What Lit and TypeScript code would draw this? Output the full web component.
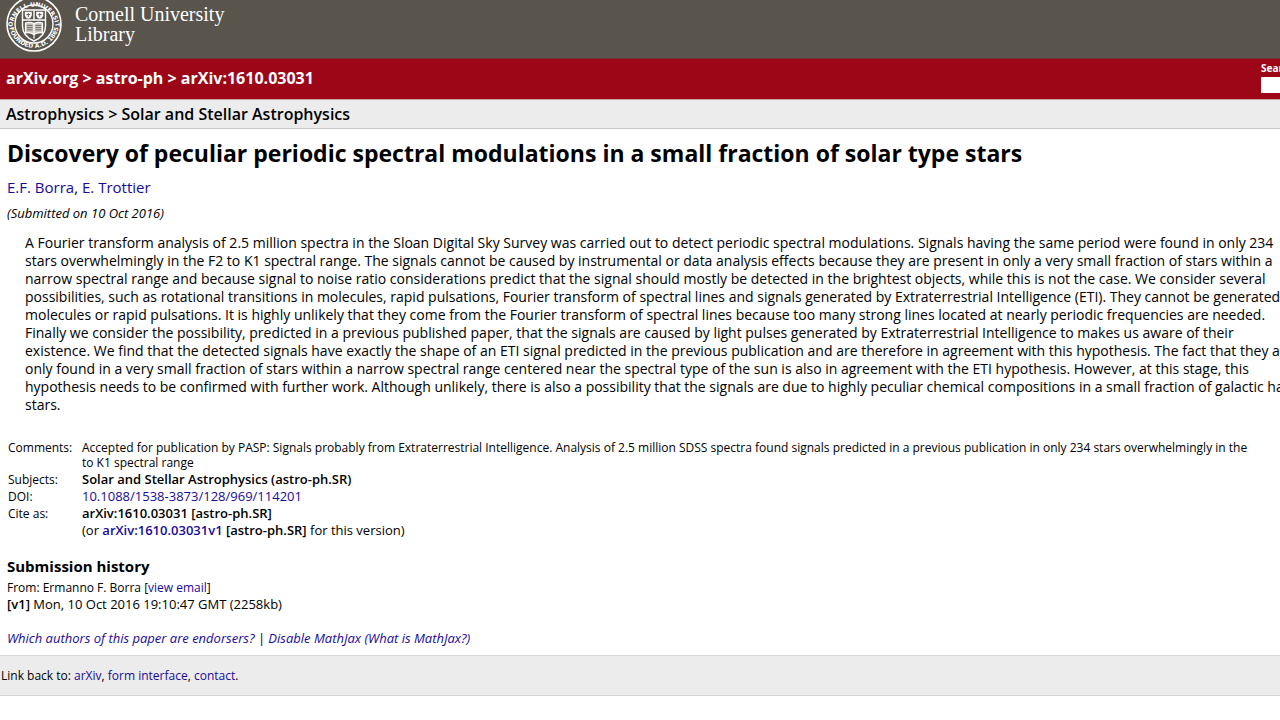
import { LitElement, html, css, svg } from "lit";
import { customElement, state } from "lit/decorators.js";

const ABSTRACT_LINES = [
  "A Fourier transform analysis of 2.5 million spectra in the Sloan Digital Sky Survey was carried out to detect periodic spectral modulations. Signals having the same period were found in only 234",
  "stars overwhelmingly in the F2 to K1 spectral range. The signals cannot be caused by instrumental or data analysis effects because they are present in only a very small fraction of stars within a",
  "narrow spectral range and because signal to noise ratio considerations predict that the signal should mostly be detected in the brightest objects, while this is not the case. We consider several",
  "possibilities, such as rotational transitions in molecules, rapid pulsations, Fourier transform of spectral lines and signals generated by Extraterrestrial Intelligence (ETI). They cannot be generated by",
  "molecules or rapid pulsations. It is highly unlikely that they come from the Fourier transform of spectral lines because too many strong lines located at nearly periodic frequencies are needed.",
  "Finally we consider the possibility, predicted in a previous published paper, that the signals are caused by light pulses generated by Extraterrestrial Intelligence to makes us aware of their",
  "existence. We find that the detected signals have exactly the shape of an ETI signal predicted in the previous publication and are therefore in agreement with this hypothesis. The fact that they are",
  "only found in a very small fraction of stars within a narrow spectral range centered near the spectral type of the sun is also in agreement with the ETI hypothesis. However, at this stage, this",
  "hypothesis needs to be confirmed with further work. Although unlikely, there is also a possibility that the signals are due to highly peculiar chemical compositions in a small fraction of galactic halo",
  "stars.",
];

const seal = svg`
  <circle cx="28" cy="28" r="27" fill="none" stroke="#fff" stroke-width="1.6"/>
  <circle cx="28" cy="28" r="19" fill="none" stroke="#fff" stroke-width="1.4"/>
  <path id="top" d="M6.5 32 A21 21 0 1 1 49.5 32" fill="none"/>
  <path id="bottom" d="M3.2 31.5 A25.3 25.3 0 0 0 52.8 31.5" fill="none"/>
  <text class="seal-text"><textPath href="#top" startOffset="50%" text-anchor="middle">CORNELL UNIVERSITY</textPath></text>
  <text class="seal-text"><textPath href="#bottom" startOffset="50%" text-anchor="middle">FOUNDED A.D. 1865</textPath></text>
  <path d="M16.5 14 H39.5 V30 C39.5 38 35 42 28 45 C21 42 16.5 38 16.5 30 Z" fill="none" stroke="#fff" stroke-width="1.4"/>
  <path d="M16.5 24 H39.5 M28 14 V24" stroke="#fff" stroke-width="1.4"/>
  <path d="M18.8 15.8 H25.8 V19.4 Q25.4 21.8 22.3 22.8 Q19.2 21.8 18.8 19.4 Z M30.2 15.8 H37.2 V19.4 Q36.8 21.8 33.7 22.8 Q30.6 21.8 30.2 19.4 Z" fill="#fff"/>
  <path d="M20.4 18.6 H24.2 M31.8 18.6 H35.6 M22.3 17 V21 M33.7 17 V21" stroke="#59554c" stroke-width=".9"/>
  <path d="M19.5 27 Q24 25.6 28 27.6 Q32 25.6 36.5 27 V37 Q32 36 28 38.4 Q24 36 19.5 37 Z" fill="#c9c6c0" stroke="#fff" stroke-width="1.2"/>
  <path d="M21 29.4 H26.6 M21 31.6 H26.6 M21 33.8 H26.6 M29.4 29.4 H35 M29.4 31.6 H35 M29.4 33.8 H35" stroke="#59554c" stroke-width=".8"/>
  <path d="M28 27 V42.5" stroke="#fff" stroke-width="1.2"/>
`;

@customElement("app-root")
export class AppRoot extends LitElement {
  @state() private query = "";

  static styles = css`
    :host {
      display: block;
      min-height: 100vh;
      overflow: hidden;
      background: #fff;
      color: #000;
      font-family: "Open Sans", "Noto Sans", sans-serif;
      font-size: 13px;
      line-height: 17px;
    }
    a { color: #1a0a99; text-decoration: none; }
    b { font-weight: 600; }
    h1, h2, p { margin: 0; }
    .library {
      display: flex;
      gap: 13px;
      height: 58px;
      padding-left: 6px;
      background: #59554c;
      border-bottom: 1px solid #77303a;
      overflow: hidden;
    }
    .seal { width: 56px; height: 56px; margin-top: -4px; flex: none; overflow: visible; }
    .seal-text { font: bold 6px "DejaVu Sans", sans-serif; fill: #fff; }
    .library-name {
      color: #fff;
      padding-top: 4px;
      font: 20px/20px "Palatino Linotype", Palatino, "Liberation Serif", serif;
      white-space: nowrap;
    }
    .masthead {
      display: flex;
      justify-content: space-between;
      height: 40px;
      padding-left: 6px;
      background: #9c0617;
      border-bottom: 1px solid #c9a3a0;
      color: #fff;
      font-weight: bold;
    }
    .masthead a { color: #fff; }
    .crumbs { font-size: 16px; line-height: 38px; }
    .search {
      width: 19px;
      flex: none;
      overflow: hidden;
      padding-top: 2px;
      font-size: 10px;
      line-height: 14px;
      white-space: nowrap;
    }
    .search label { display: block; }
    .search input {
      display: block;
      box-sizing: border-box;
      width: 120px;
      height: 16px;
      margin-top: 2px;
      border: 0;
      border-radius: 0;
      background: #fff;
    }
    .subject {
      height: 28px;
      padding-left: 6px;
      background: #ececec;
      border-bottom: 1px solid #c6c6c6;
      font-size: 16px;
      line-height: 28px;
      font-weight: 600;
    }
    .paper { padding: 8px 0 8px 7px; white-space: nowrap; }
    .title { font-size: 23px; line-height: 32px; }
    .authors { margin-top: 8px; font-size: 15px; line-height: 20px; }
    .date { margin-top: 7px; line-height: 18px; font-style: italic; }
    .abstract { margin: 12px 0 0 18px; font-size: 14px; line-height: 18px; }
    .line { display: block; }
    .meta { margin-top: 26px; border-spacing: 0; }
    .meta th, .meta td {
      padding: 0 0 2px 1px;
      vertical-align: top;
      text-align: left;
      line-height: 15px;
    }
    .meta th { width: 73px; font-weight: normal; font-size: 12px; }
    .meta .comments { font-size: 12px; }
    .history { margin: 15px 0 2px; font-size: 15px; line-height: 22px; }
    .from { font-size: 12px; }
    .extra { margin-top: 17px; font-style: italic; }
    .footer {
      padding: 11px 1px;
      background: #ececec;
      border: solid #d6d6d6;
      border-width: 1px 0;
      font-size: 12px;
    }
  `;

  render() {
    return html`
      <header>
        <div class="library">
          <svg class="seal" viewBox="0 0 56 56" role="img" aria-label="Cornell University seal">${seal}</svg>
          <div class="library-name">Cornell University<br />Library</div>
        </div>
        <div class="masthead">
          <nav class="crumbs"><a href="#arxiv">arXiv.org</a> &gt; <a href="#astro-ph">astro-ph</a> &gt; arXiv:1610.03031</nav>
          <form class="search" @submit=${(e: Event) => e.preventDefault()}>
            <label for="query">Search</label>
            <input id="query" type="text" .value=${this.query}
              @input=${(e: Event) => (this.query = (e.target as HTMLInputElement).value)} />
          </form>
        </div>
        <div class="subject">Astrophysics &gt; Solar and Stellar Astrophysics</div>
      </header>
      <main class="paper">
        <h1 class="title">Discovery of peculiar periodic spectral modulations in a small fraction of solar type stars</h1>
        <p class="authors"><a href="#borra">E.F. Borra</a>, <a href="#trottier">E. Trottier</a></p>
        <p class="date">(Submitted on 10 Oct 2016)</p>
        <p class="abstract">${ABSTRACT_LINES.map((l) => html`<span class="line">${l}</span>`)}</p>
        <table class="meta">
          <tr>
            <th scope="row">Comments:</th>
            <td class="comments">Accepted for publication by PASP: Signals probably from Extraterrestrial Intelligence. Analysis of 2.5 million SDSS spectra found signals predicted in a previous publication in only 234 stars overwhelmingly in the<br />to K1 spectral range</td>
          </tr>
          <tr><th scope="row">Subjects:</th><td><b>Solar and Stellar Astrophysics (astro-ph.SR)</b></td></tr>
          <tr><th scope="row">DOI:</th><td><a href="#doi">10.1088/1538-3873/128/969/114201</a></td></tr>
          <tr><th scope="row">Cite as:</th><td><b>arXiv:1610.03031 [astro-ph.SR]</b></td></tr>
          <tr><th></th><td>(or <b><a href="#v1">arXiv:1610.03031v1</a> [astro-ph.SR]</b> for this version)</td></tr>
        </table>
        <h2 class="history">Submission history</h2>
        <p class="from">From: Ermanno F. Borra [<a href="#email">view email</a>]</p>
        <p><b>[v1]</b> Mon, 10 Oct 2016 19:10:47 GMT (2258kb)</p>
        <p class="extra"><a href="#endorsers">Which authors of this paper are endorsers?</a> | <a href="#disable">Disable MathJax</a> <a href="#mathjax">(What is MathJax?)</a></p>
      </main>
      <footer class="footer">Link back to: <a href="#home">arXiv</a>, <a href="#form">form interface</a>, <a href="#contact">contact</a>.</footer>
    `;
  }
}
